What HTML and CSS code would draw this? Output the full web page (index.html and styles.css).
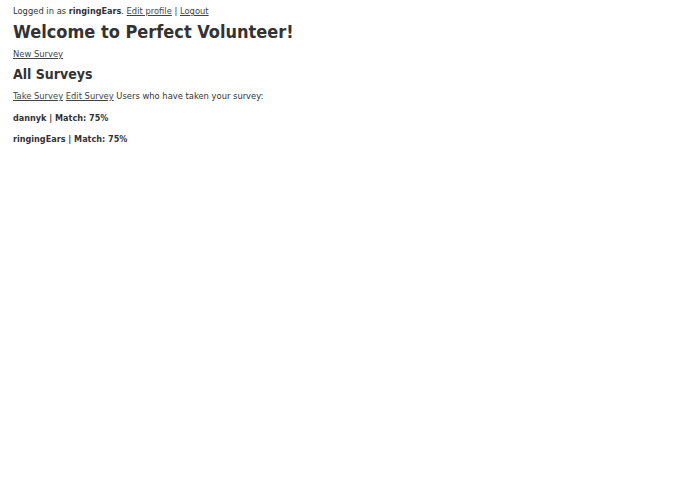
FILE: index.html
```html
<!DOCTYPE html>
<html lang="en">
<head>
    <meta charset="UTF-8">
    <title>Perfect Volunteer</title>
    <link rel="stylesheet" href="styles.css">
</head>
<body>

<!-- Login bar -->
<div class="login-bar">
    Logged in as <strong>ringingEars</strong>.
    <a href="#">Edit profile</a> | <a href="#">Logout</a>
</div>

<h1>Welcome to Perfect Volunteer!</h1>

<p><a href="#">New Survey</a></p>

<h2>All Surveys</h2>

<p class="survey-links">
    <a href="#">Take Survey</a>
    <a href="#">Edit Survey</a>
    Users who have taken your survey:
</p>

<p class="match">dannyk | Match: 75%</p>
<p class="match">ringingEars | Match: 75%</p>

</body>
</html>
```

FILE: styles.css
```css
body {
    font-family: "DejaVu Sans Condensed", "DejaVu Sans", Verdana, sans-serif;
    font-size: 9.3px;
    line-height: 12px;
    color: #333;
    background-color: #fff;
    margin: 0;
    padding: 5px 13px;
}
a {
    color: #444;
}
strong {
    font-size: 9px;
}
h1 {
    font-size: 18px;
    line-height: 22px;
    margin: 4px 0 5px;
}
h2 {
    font-size: 14px;
    line-height: 18px;
    margin: 5px 0;
}
p {
    margin: 5px 0;
}
.survey-links {
    margin-top: 7px;
}
.match {
    font-size: 9px;
    font-weight: bold;
    margin: 9.5px 0;
}
```
